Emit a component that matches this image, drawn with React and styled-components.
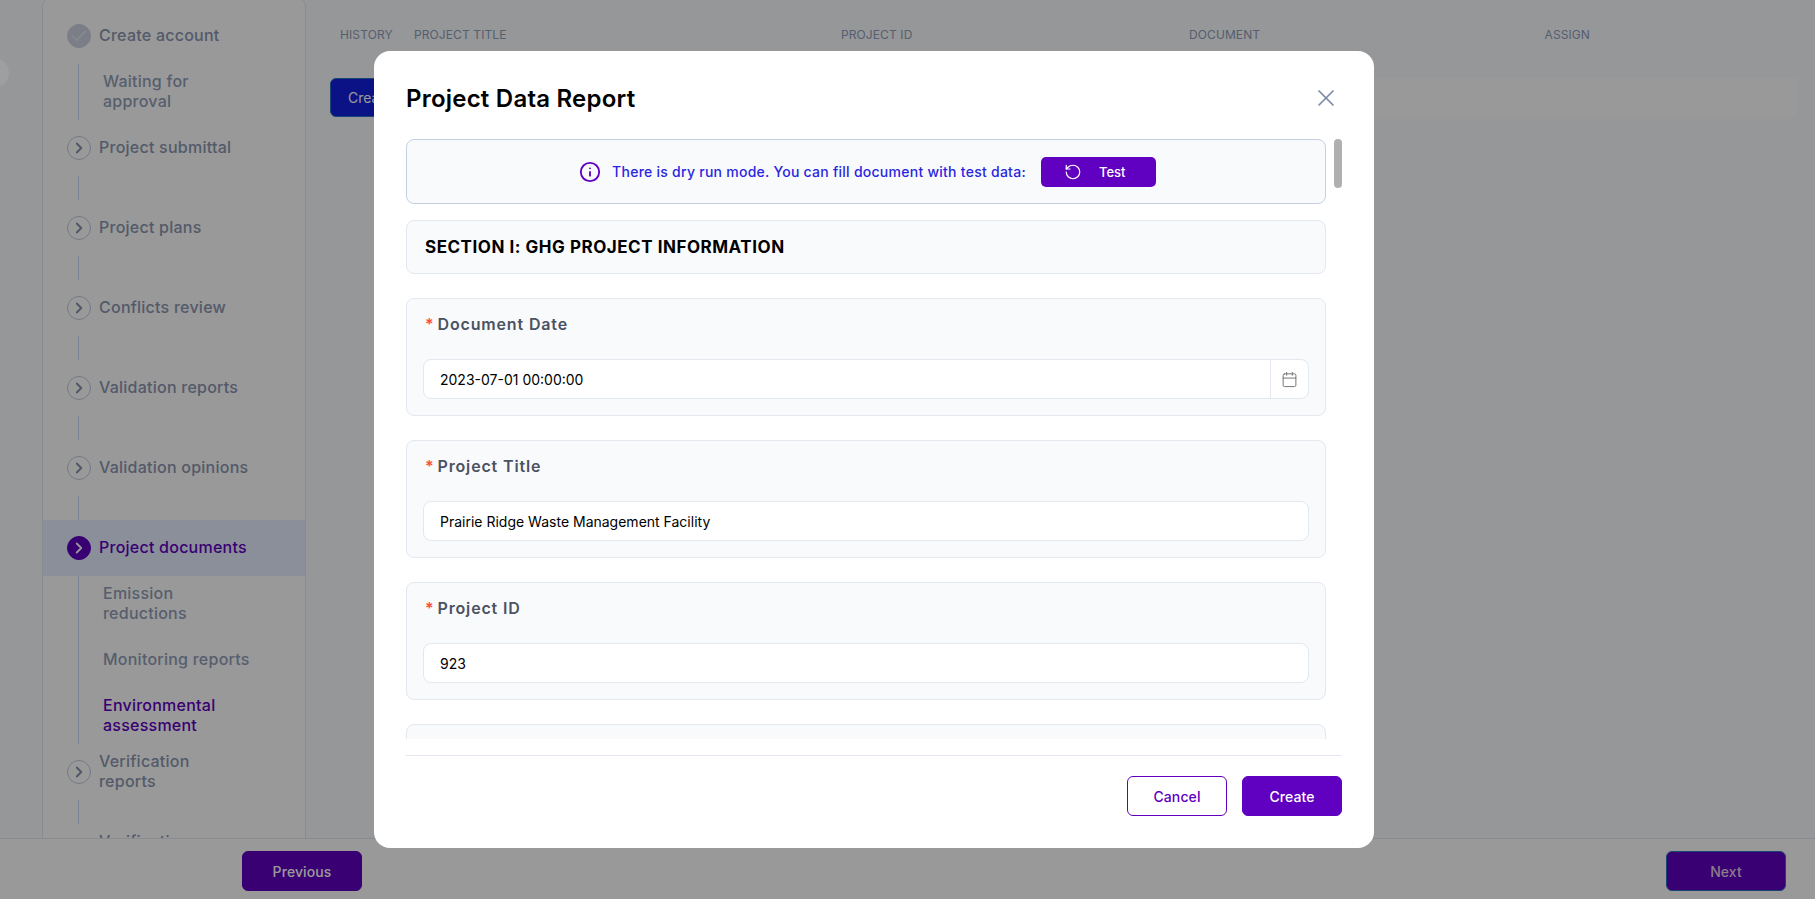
import React from "react";
import styled, { createGlobalStyle } from "styled-components";
import { Check, ChevronRight, X, Info, RotateCcw, Calendar } from "lucide-react";

const Global = createGlobalStyle`
  html, body { margin: 0; padding: 0; height: 100%; overflow: hidden; }
  body { font-family: Inter, "Liberation Sans", sans-serif; background: #fafcff; }
  #root { height: 100%; }
  * { box-sizing: border-box; }
`;

const Page = styled.div`
  height: 100vh;
  display: flex;
  flex-direction: column;
  overflow: hidden;
  position: relative;
`;
const Main = styled.div`
  flex: 1;
  min-height: 0;
  display: flex;
  padding-left: 42px;
  overflow: hidden;
`;
const Sidebar = styled.aside`
  width: 264px;
  flex: none;
  margin-top: -2px;
  padding-top: 9px;
  height: 1000px;
  background: #fff;
  border: 1px solid #e3e8f0;
  border-radius: 8px;
`;
const StepRow = styled.div`
  height: 56px;
  display: flex;
  align-items: center;
  gap: 8px;
  padding-left: 24px;
  background: ${(p) => (p.$active ? "#e6eeff" : "transparent")};
`;
const StepCircle = styled.span`
  width: 24px;
  height: 24px;
  flex: none;
  border-radius: 50%;
  display: flex;
  align-items: center;
  justify-content: center;
  border: 1px solid ${(p) => (p.$active ? "#6000c0" : p.$done ? "#cdd3df" : "#c0cbdf")};
  background: ${(p) => (p.$active ? "#6000c0" : p.$done ? "#cdd3df" : "transparent")};
  color: ${(p) => (p.$active ? "#fff" : p.$done ? "#e4e8f0" : "#848fa9")};
`;
const StepLabel = styled.span`
  width: ${(p) => (p.$narrow ? "130px" : "170px")};
  font-size: 16px;
  line-height: 20px;
  font-weight: 500;
  letter-spacing: 0.24px;
  margin-top: -2px;
  color: ${(p) => (p.$active ? "#6000c0" : "#8b96b0")};
`;
const SubList = styled.div`
  margin-left: 35px;
  min-height: 24px;
  border-left: 1px solid #cfdcf5;
  padding-left: 24px;
`;
const SubItem = styled.div`
  height: 56px;
  width: 150px;
  display: flex;
  align-items: center;
  padding-bottom: 2px;
  font-size: 16px;
  line-height: 20px;
  font-weight: 500;
  letter-spacing: 0.24px;
  color: ${(p) => (p.$active ? "#6000c0" : "#929db6")};
`;
const Content = styled.div`
  flex: 1;
  min-width: 0;
  padding: 27px 18px 0 24px;
`;
const TableHead = styled.div`
  display: grid;
  grid-template-columns: 74px 427px 348px 355.5px 1fr;
  padding-left: 10px;
  height: 16px;
  font-size: 12px;
  line-height: 16px;
  letter-spacing: 0.1px;
  color: #8f9db9;
`;
const ActionBar = styled.div`
  margin-top: 35px;
  height: 39px;
  background: #fff;
  display: flex;
`;
const BlueButton = styled.button`
  width: 120px;
  height: 39px;
  border: 1px solid #2b74c4;
  border-radius: 6px;
  background: #121ede;
  color: #fff;
  font: 400 14px Inter, sans-serif;
  text-align: left;
  padding-left: 17px;
`;
const Footer = styled.footer`
  height: 61px;
  flex: none;
  background: #fff;
  border-top: 1px solid #e3e8f0;
  display: flex;
  align-items: flex-start;
  justify-content: space-between;
  padding: 12px 29px 0 242px;
`;
const NavButton = styled.button`
  width: 120px;
  height: 40px;
  border-radius: 6px;
  border: 1px solid ${(p) => (p.$focus ? "#2b74c4" : "#6000c0")};
  background: #6000c0;
  color: ${(p) => (p.$focus ? "#e6cfe8" : "#fff")};
  font: 500 14px Inter, sans-serif;
  letter-spacing: 0.1px;
`;
const GhostDisc = styled.span`
  position: absolute;
  z-index: 2;
  left: -21px;
  top: 58px;
  width: 30px;
  height: 30px;
  border-radius: 50%;
  background: #9f9f9f;
`;
const Overlay = styled.div`
  position: fixed;
  inset: 0;
  background: rgba(0, 0, 0, 0.4);
  display: flex;
  align-items: center;
  padding-left: 374px;
`;
const Modal = styled.div`
  width: 1000px;
  height: 797px;
  background: #fff;
  border-radius: 16px;
  padding: 0 32px 32px;
  display: flex;
  flex-direction: column;
`;
const ModalHead = styled.div`
  height: 88px;
  flex: none;
  display: flex;
  align-items: center;
  justify-content: space-between;
  padding: 6px 2px 0 0;
`;
const Title = styled.h2`
  margin: 0;
  font-size: 24px;
  font-weight: 600;
  letter-spacing: 0.22px;
  color: #000;
`;
const CloseIcon = styled(X)`
  color: #7f8ba4;
`;
const Scroll = styled.div`
  position: relative;
  height: 600px;
  flex: none;
  overflow: hidden;
  padding-right: 16px;
`;
const Thumb = styled.div`
  position: absolute;
  top: 0;
  right: 0;
  width: 8px;
  height: 49px;
  border-radius: 4px;
  background: #b0b0b0;
`;
const Alert = styled.div`
  height: 65px;
  background: #f9fafc;
  border: 1px solid #c5cfe4;
  border-radius: 8px;
  display: flex;
  align-items: center;
  justify-content: center;
  padding-left: 3px;
  margin-bottom: 16px;
`;
const InfoIcon = styled(Info)`
  color: #6000c0;
  margin-right: 11px;
`;
const AlertText = styled.span`
  font-size: 14px;
  line-height: 20px;
  font-weight: 500;
  letter-spacing: 0.26px;
  color: #2a26e0;
  margin-right: 15px;
`;
const TestButton = styled.button`
  width: 115px;
  height: 30px;
  border: none;
  border-radius: 5px;
  background: #6000c0;
  color: #fff;
  font: 500 13px Inter, sans-serif;
  display: flex;
  align-items: center;
  gap: 17px;
  padding: 0 0 0 23px;
`;
const SectionCard = styled.div`
  height: 54px;
  background: #f9fafc;
  border: 1px solid #e3e8f0;
  border-radius: 8px;
  display: flex;
  align-items: center;
  padding-left: 18px;
  font-size: 17px;
  font-weight: 700;
  letter-spacing: 0.53px;
  color: #000;
  margin-bottom: 24px;
`;
const FieldCard = styled.div`
  height: 118px;
  background: #f9fafc;
  border: 1px solid #e3e8f0;
  border-radius: 8px;
  padding: 13px 16px 0;
  margin-bottom: 24px;
`;
const FieldLabel = styled.div`
  height: 24px;
  line-height: 24px;
  font-size: 16px;
  font-weight: 600;
  letter-spacing: 0.85px;
  color: #4b5262;
  padding-left: 2px;
  margin-bottom: 23px;
`;
const Star = styled.span`
  color: #ff4d3d;
  margin-right: 3px;
`;
const InputBox = styled.div`
  height: 40px;
  background: #fff;
  border: 1px solid #e3e8f0;
  border-radius: 8px;
  display: flex;
  align-items: center;
  padding-left: 16px;
  font-size: 14px;
  color: #000;
`;
const InputValue = styled.span`
  flex: 1;
`;
const Addon = styled.span`
  width: 38px;
  height: 100%;
  border-left: 1px solid #e3e8f0;
  display: flex;
  align-items: center;
  justify-content: center;
  color: #757575;
`;
const ModalFoot = styled.div`
  margin-top: 16px;
  padding-top: 20px;
  border-top: 1px solid #e3e8f0;
  display: flex;
  justify-content: flex-end;
  gap: 15px;
`;
const FootButton = styled.button`
  width: 100px;
  height: 40px;
  border-radius: 6px;
  border: 1px solid #6000c0;
  background: ${(p) => (p.$primary ? "#6000c0" : "#fff")};
  color: ${(p) => (p.$primary ? "#fff" : "#6000c0")};
  font: 500 14px Inter, sans-serif;
  letter-spacing: 0.1px;
`;

const steps = [
  { label: "Create account", done: true, subs: ["Waiting for approval"] },
  { label: "Project submittal" },
  { label: "Project plans" },
  { label: "Conflicts review" },
  { label: "Validation reports" },
  { label: "Validation opinions" },
  {
    label: "Project documents",
    active: true,
    subs: ["Emission reductions", "Monitoring reports", "Environmental assessment"],
    activeSub: 2,
  },
  { label: "Verification reports", narrow: true },
  { label: "Verification opinions", narrow: true },
];

const fields = [
  { label: "Document Date", value: "2023-07-01 00:00:00", date: true },
  { label: "Project Title", value: "Prairie Ridge Waste Management Facility" },
  { label: "Project ID", value: "923" },
];

export default function App() {
  return (
    <Page>
      <Global />
      <GhostDisc />
      <Main>
        <Sidebar>
          {steps.map((s) => (
            <React.Fragment key={s.label}>
              <StepRow $active={s.active}>
                <StepCircle $active={s.active} $done={s.done}>
                  {s.done ? <Check size={20} strokeWidth={1.8} /> : <ChevronRight size={18} strokeWidth={2.4} />}
                </StepCircle>
                <StepLabel $active={s.active} $narrow={s.narrow}>{s.label}</StepLabel>
              </StepRow>
              <SubList>
                {(s.subs || []).map((t, i) => (
                  <SubItem key={t} $active={s.activeSub === i}>{t}</SubItem>
                ))}
              </SubList>
            </React.Fragment>
          ))}
        </Sidebar>
        <Content>
          <TableHead>
            <span>HISTORY</span>
            <span>PROJECT TITLE</span>
            <span>PROJECT ID</span>
            <span>DOCUMENT</span>
            <span>ASSIGN</span>
          </TableHead>
          <ActionBar>
            <BlueButton>Create</BlueButton>
          </ActionBar>
        </Content>
      </Main>
      <Footer>
        <NavButton>Previous</NavButton>
        <NavButton $focus>Next</NavButton>
      </Footer>
      <Overlay>
        <Modal>
          <ModalHead>
            <Title>Project Data Report</Title>
            <CloseIcon size={28} strokeWidth={1.5} />
          </ModalHead>
          <Scroll>
            <Thumb />
            <Alert>
              <InfoIcon size={22} strokeWidth={2} />
              <AlertText>There is dry run mode. You can fill document with test data:</AlertText>
              <TestButton>
                <RotateCcw size={18} strokeWidth={1.6} />
                Test
              </TestButton>
            </Alert>
            <SectionCard>SECTION I: GHG PROJECT INFORMATION</SectionCard>
            {fields.map((f) => (
              <FieldCard key={f.label}>
                <FieldLabel><Star>*</Star>{f.label}</FieldLabel>
                <InputBox>
                  <InputValue>{f.value}</InputValue>
                  {f.date && <Addon><Calendar size={17} strokeWidth={1.4} /></Addon>}
                </InputBox>
              </FieldCard>
            ))}
            <FieldCard />
          </Scroll>
          <ModalFoot>
            <FootButton>Cancel</FootButton>
            <FootButton $primary>Create</FootButton>
          </ModalFoot>
        </Modal>
      </Overlay>
    </Page>
  );
}
